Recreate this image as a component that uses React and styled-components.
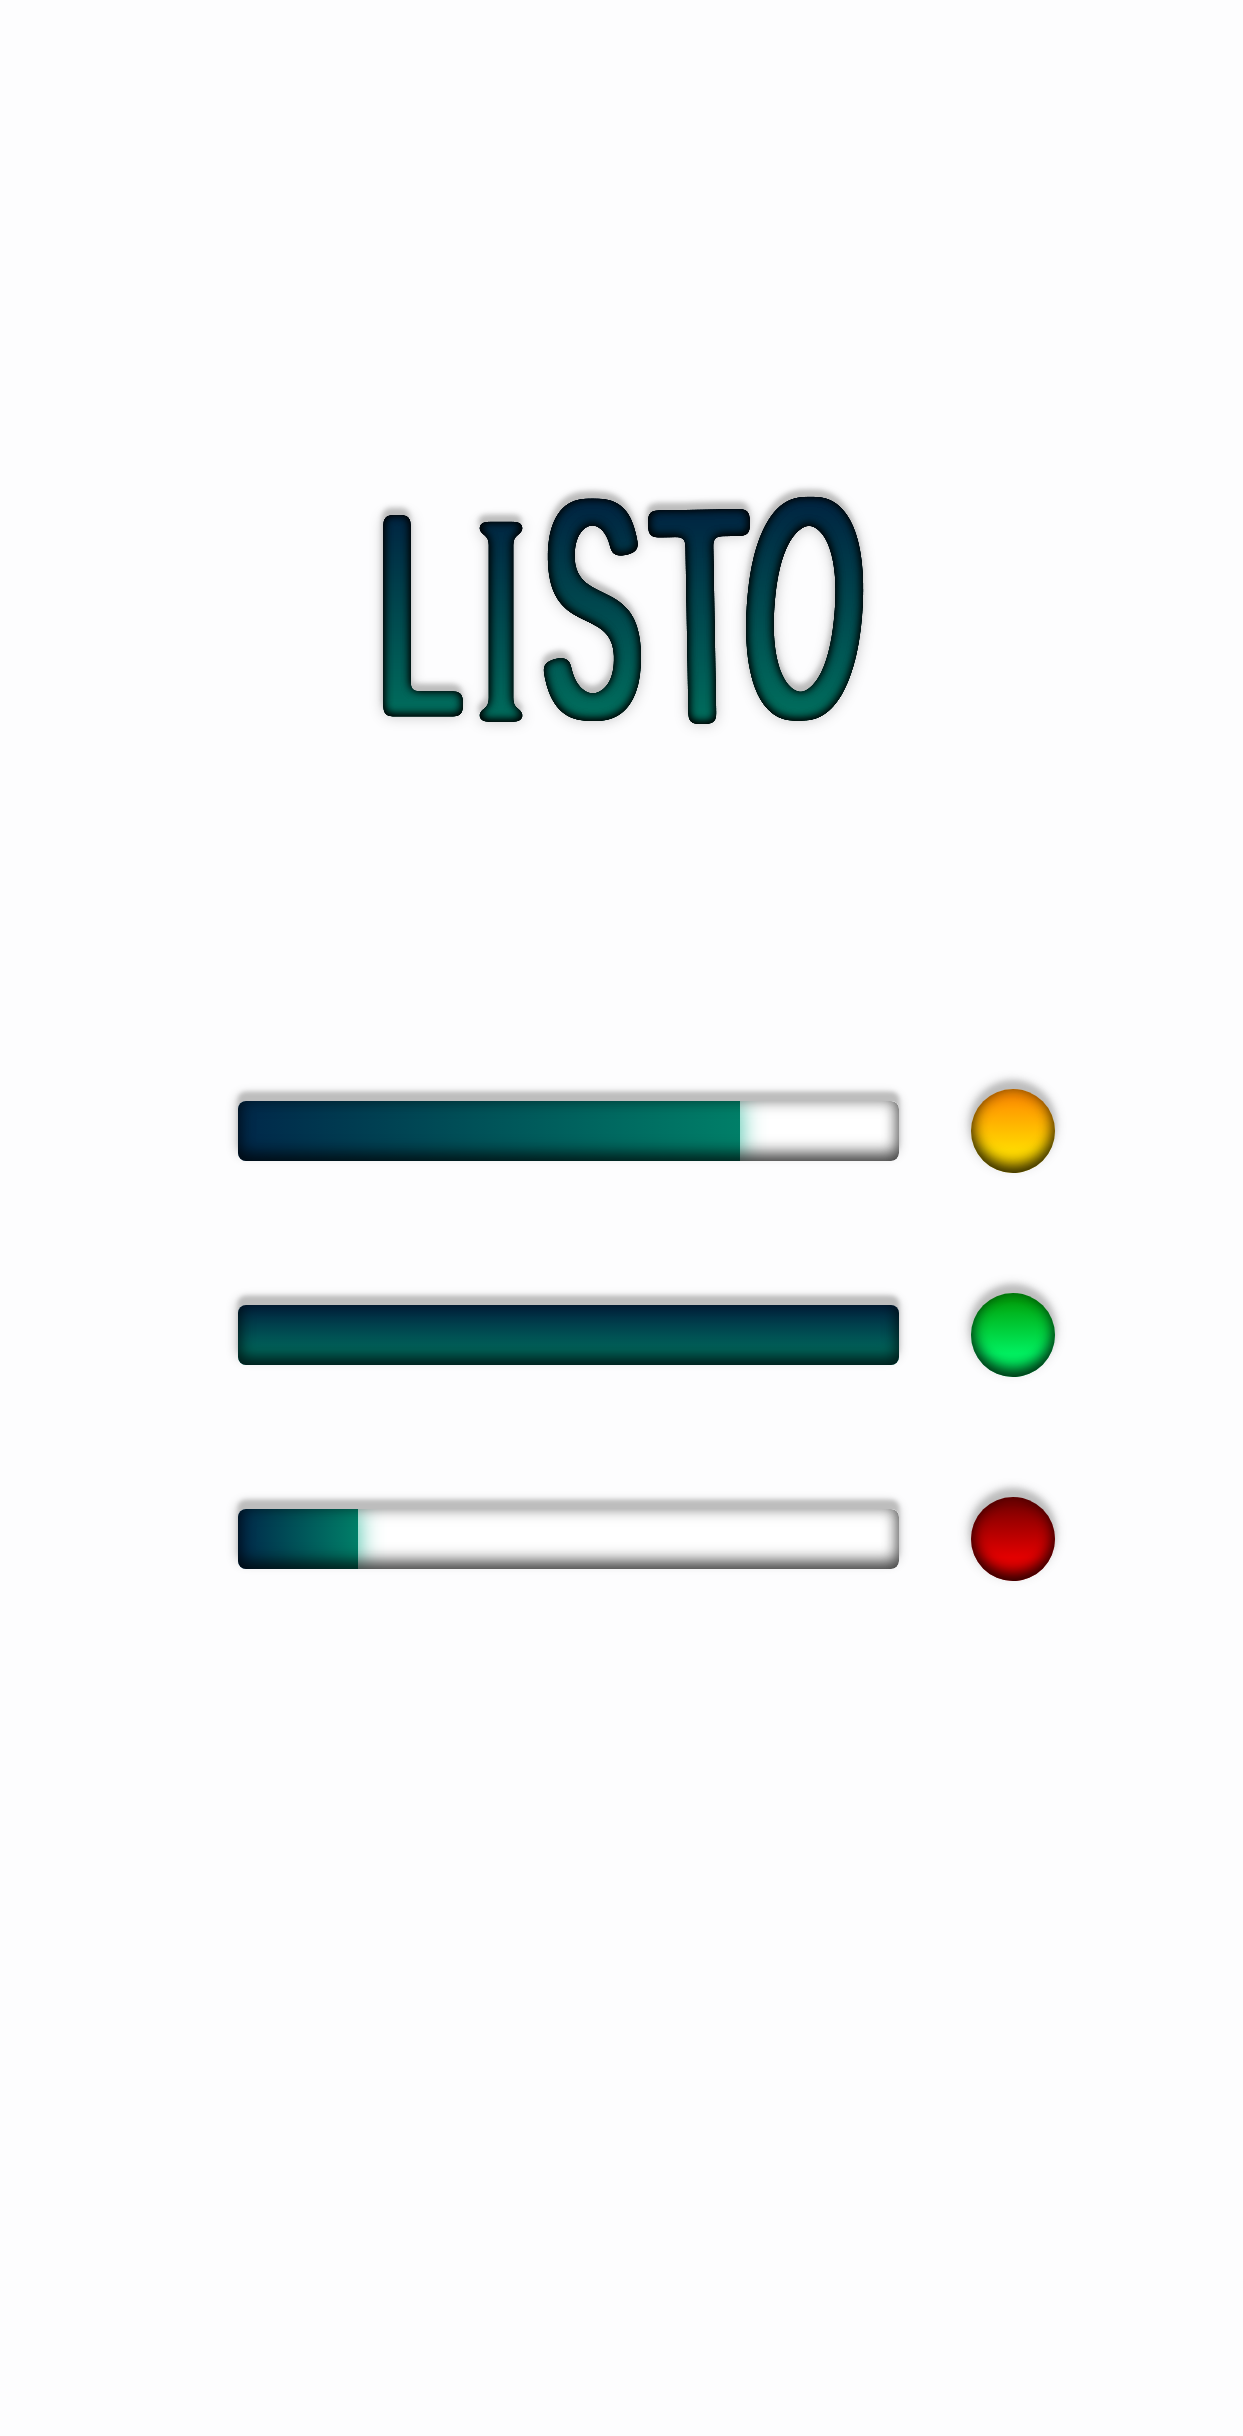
import React from "react"
import styled, { createGlobalStyle } from "styled-components"

const GlobalStyle = createGlobalStyle`
  html, body {
    margin: 0;
    padding: 0;
    background: #fdfdfe;
  }
`

const Page = styled.div`
  width: 1243px;
  height: 2436px;
  overflow: hidden;
  background: #fdfdfe;
`

const Title = styled.h1`
  display: flex;
  margin: 0;
  padding: 463px 0 0 377px;
  height: 300px;
  font-weight: 400;
  font-size: 300px;
  line-height: 1;
  filter: url(#listo-ink);
`

const Letter = styled.span`
  display: flex;
  flex: none;
  justify-content: center;
  width: ${(p) => p.$w}px;
  height: 300px;
`

const Glyph = styled.span`
  flex: none;
  height: 300px;
  font-family: ${(p) => p.$font || '"Liberation Sans"'}, sans-serif;
  color: transparent;
  background: linear-gradient(180deg, #002240 14%, #006c5c 84%);
  -webkit-background-clip: text;
  background-clip: text;
  transform: translateY(${(p) => p.$dy || 0}px) rotate(${(p) => p.$rot || 0}deg) scale(${(p) => p.$sx}, ${(p) => p.$sy || 1});
`

const Rows = styled.div`
  display: flex;
  flex-direction: column;
  gap: 120px;
  margin: 326px 0 0 238px;
`

const Row = styled.div`
  display: flex;
  align-items: center;
  gap: 72px;
`

const TrackBox = styled.div`
  border-radius: 8px;
  box-shadow: 0 -9px 4px #bdbdbd, -1px -6px 12px rgba(0, 0, 0, 0.24);
`

const Track = styled.div`
  position: relative;
  width: 661px;
  height: 60px;
  border-radius: 8px;
  background: #fff;
  overflow: hidden;
`

const Fill = styled.div`
  height: 100%;
  background: ${(p) =>
    p.$full
      ? "linear-gradient(180deg, #002240 0%, #00665c 75%, #00665c 100%)"
      : "linear-gradient(90deg, #00284a, #007f68)"};
  box-shadow: 0 0 24px #3fbfa5;
`

const Gloss = styled.div`
  position: absolute;
  inset: 0;
  border-radius: 8px;
  box-shadow: inset 0 -8px 16px rgba(0, 0, 0, 0.66), inset 0 0 16px rgba(0, 0, 0, 0.36);
`

const Lamp = styled.div`
  flex: none;
  width: 84px;
  height: 84px;
  border-radius: 50%;
  background: linear-gradient(180deg, ${(p) => p.$top} 10%, ${(p) => p.$bottom} 72%);
  box-shadow: 0 -8px 6px #bdbdbd, -1px -6px 14px rgba(0, 0, 0, 0.24), inset 0 -8px 14px rgba(0, 0, 0, 0.7),
    inset 0 0 16px rgba(0, 0, 0, 0.46);
`

const HiddenSvg = styled.svg`
  display: block;
  width: 0;
  height: 0;
`

const letters = [
  { ch: "L", w: 84, sx: 0.5, sy: 0.96, dy: 2 },
  { ch: "I", w: 80, sx: 0.4, sy: 1, dy: 6, font: '"Liberation Serif"' },
  { ch: "S", w: 102, sx: 0.49, sy: 1.03, dy: -4 },
  { ch: "T", w: 116, sx: 0.52, sy: 1.02, dy: 3, rot: -1 },
  { ch: "O", w: 92, sx: 0.5, sy: 1.04, dy: -5, rot: 4 },
]

const levels = [
  { value: 76, top: "#ff9000", bottom: "#ffd800" },
  { value: 100, top: "#00a810", bottom: "#00f060" },
  { value: 18.2, top: "#800000", bottom: "#e40000" },
]

export default function App() {
  return (
    <Page>
      <GlobalStyle />
      <HiddenSvg aria-hidden="true">
        <filter id="listo-ink" x="-10%" y="-10%" width="120%" height="120%" colorInterpolationFilters="sRGB">
          <feMorphology in="SourceGraphic" operator="dilate" radius="6 1" result="fat" />
          <feGaussianBlur in="fat" stdDeviation="4" result="soft" />
          <feColorMatrix in="soft" type="matrix" values="1 0 0 0 0 0 1 0 0 0 0 0 1 0 0 0 0 0 20 -8" result="ink" />
          <feColorMatrix in="ink" type="matrix" values="0 0 0 0 0 0 0 0 0 0 0 0 0 0 0 0 0 0 -1 1" result="outside" />
          <feGaussianBlur in="outside" stdDeviation="5" result="edge" />
          <feOffset in="edge" dy="-1" result="edgeMoved" />
          <feComposite in="edgeMoved" in2="ink" operator="in" result="inner" />
          <feOffset in="ink" dy="-7" dx="-1" result="up" />
          <feGaussianBlur in="up" stdDeviation="2.5" result="upSoft" />
          <feColorMatrix in="upSoft" type="matrix" values="0 0 0 0 0.74 0 0 0 0 0.74 0 0 0 0 0.74 0 0 0 1 0" result="cast" />
          <feGaussianBlur in="ink" stdDeviation="7" result="haloSoft" />
          <feColorMatrix in="haloSoft" type="matrix" values="0 0 0 0 0 0 0 0 0 0 0 0 0 0 0 0 0 0 0.22 0" result="halo" />
          <feMerge>
            <feMergeNode in="halo" />
            <feMergeNode in="cast" />
            <feMergeNode in="ink" />
            <feMergeNode in="inner" />
            <feMergeNode in="inner" />
          </feMerge>
        </filter>
      </HiddenSvg>
      <Title aria-label="LISTO">
        {letters.map((l) => (
          <Letter key={l.ch} $w={l.w}>
            <Glyph $sx={l.sx} $sy={l.sy} $dy={l.dy} $rot={l.rot} $font={l.font}>
              {l.ch}
            </Glyph>
          </Letter>
        ))}
      </Title>
      <Rows>
        {levels.map((l, i) => (
          <Row key={i}>
            <TrackBox>
              <Track>
                <Fill $full={l.value === 100} style={{ width: `${l.value}%` }} />
                <Gloss />
              </Track>
            </TrackBox>
            <Lamp $top={l.top} $bottom={l.bottom} />
          </Row>
        ))}
      </Rows>
    </Page>
  )
}
